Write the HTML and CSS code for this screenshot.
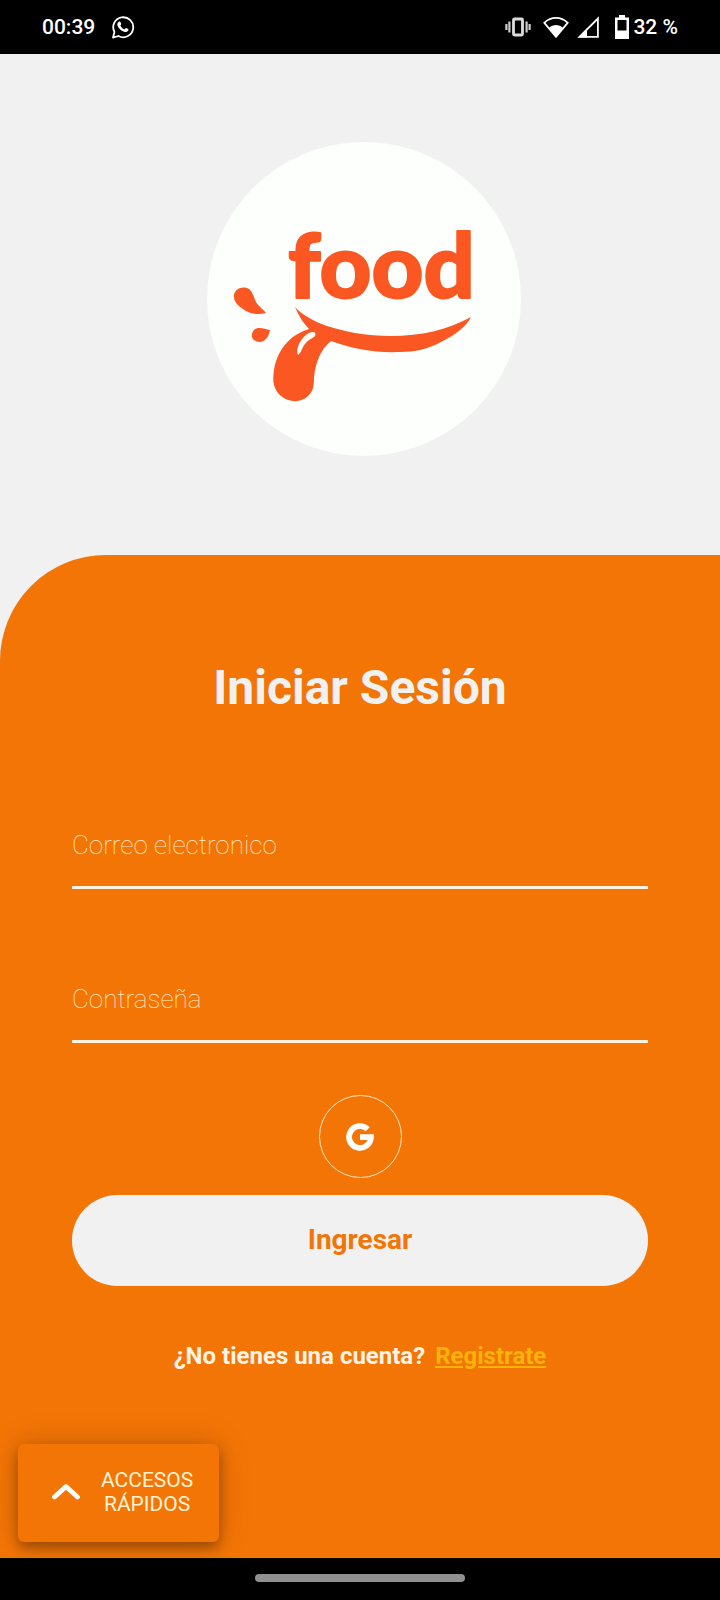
FILE: index.html
```html
<!DOCTYPE html>
<html lang="es">
<head>
<meta charset="utf-8">
<meta name="viewport" content="width=device-width, initial-scale=1">
<title>Iniciar Sesión</title>
<link rel="stylesheet" href="styles.css">
</head>
<body>
<header class="status-bar">
  <div class="status-left">
    <span>00:39</span>
    <svg class="icon-whatsapp" viewBox="0 0 24 24" width="24" height="24" aria-hidden="true">
      <path d="M2 22.600l1.500-5.500a10 10 0 1 1 3.900 3.900z" fill="none" stroke="#fff" stroke-width="1.800" stroke-linejoin="round"/>
      <path d="M8.200 6.600c.5-.3 1-.2 1.200.3l.8 1.900c.2.500-.7 1.400-.8 1.700.8 1.800 2.200 3.100 4.100 3.800.5-.3 1.100-1.400 1.600-1.200l2.100 1c.4.300.2 1.200-.1 1.700-1 1.300-2.500 1.500-4 1-3.400-1.100-5.500-3.300-6.700-6.300-.4-1.500.3-3.200 1.800-3.900z" fill="#fff"/>
    </svg>
  </div>
  <div class="status-right">
    <svg class="icon-vibrate" viewBox="0 0 26 20" width="26" height="20" aria-hidden="true">
      <rect x="8.500" y="2" width="9" height="16" rx="1" fill="none" stroke="#ddd" stroke-width="2.800"/>
      <path d="M1.400 7v6M4.400 4.500v11M24.600 7v6M21.600 4.500v11" stroke="#ccc" stroke-width="2.200"/>
    </svg>
    <svg class="icon-wifi" viewBox="0 0 26 22" width="26" height="22" aria-hidden="true">
      <path d="M1.300 6.800C8 .3 18 .3 24.700 6.800L13 20.800z" fill="none" stroke="#fff" stroke-width="1.800"/>
      <path d="M6.200 11.500c4-3.400 9.600-3.400 13.600 0L13 21z" fill="#fff"/>
    </svg>
    <svg class="icon-signal" viewBox="0 0 22 22" width="22" height="22" aria-hidden="true">
      <path d="M2.500 20.900L20.900 2.500v18.400z" fill="none" stroke="#fff" stroke-width="1.800"/>
      <path d="M1 21.500L10 12.500v9z" fill="#fff"/>
    </svg>
    <svg viewBox="0 0 14 24" width="14" height="24" aria-hidden="true">
      <path d="M4 0h6v2.500h4V24H0V2.500h4zM2.500 5v10.500h9V5z" fill="#fff" fill-rule="evenodd"/>
    </svg>
    <span class="battery-level">32 %</span>
  </div>
</header>

<main class="screen">
  <section class="hero">
    <svg class="logo" viewBox="0 0 314 314" role="img" aria-label="food">
      <circle cx="157" cy="157" r="157" fill="#fcfffc"/>
      <g fill="#fb5722">
        <text class="logo-word" x="81" y="156">food</text>
        <path d="M88 165C94 172 102 176 112 181C135 190 160 194 184 194C214 194 240 188 264 175C260 184 248 193 234 200C221 207 208 210 193 210C168 211 146 207 124 199C113 208 109 220 107 235C107 244 106 249 102 253C95 261 82 261 74 254C67 248 65 240 67 228C70 209 82 193 102 187C96 181 92 174 88 165z"/>
        <path d="M27 155C26 147 36 143 42 147C46 150 47 156 49 160C52 165 56 167 59 171C52 173 44 172 39 169C33 165 27 161 27 155z"/>
        <path d="M47 188C51 184 58 187 63 188C62 193 60 199 53 200C46 200 42 194 47 188z"/>
      </g>
      <path d="M91 213C88 207 94 195 102 191C106 189 110 190 108 194C105 197 102 197 98 202C94 207 95 210 91 213z" fill="#fcfffc"/>
    </svg>
  </section>

  <section class="panel">
    <h1 class="title">Iniciar Sesión</h1>
    <form class="form">
      <input class="field" type="email" placeholder="Correo electronico" aria-label="Correo electronico">
      <input class="field" type="password" placeholder="Contraseña" aria-label="Contraseña">
      <button class="google" type="button" aria-label="Google">
        <svg viewBox="0 0 28 28" width="28" height="28" aria-hidden="true">
          <path d="M21.700 6.300A10.900 10.900 0 1 0 24.900 14.200H14" fill="none" stroke="#fff" stroke-width="5.800"/>
        </svg>
      </button>
      <button class="submit" type="submit">Ingresar</button>
    </form>
    <p class="signup"><span>¿No tienes una cuenta?</span><a class="signup-link" href="#">Registrate</a></p>
    <button class="shortcuts" type="button">
      <svg viewBox="0 0 28 18" width="28" height="18" aria-hidden="true">
        <path d="M2.500 14L14 3.500 25.500 14" fill="none" stroke="#fff" stroke-width="4.800" stroke-linecap="round" stroke-linejoin="round"/>
      </svg>
      <span>ACCESOS<br>RÁPIDOS</span>
    </button>
  </section>
</main>

<footer class="nav-bar"><div class="nav-handle"></div></footer>
</body>
</html>
```
FILE: styles.css
```css
* {
  box-sizing: border-box;
}

body {
  margin: 0;
  min-height: 100vh;
  display: flex;
  flex-direction: column;
  background: #f1f1f1;
  font-family: Roboto, "Liberation Sans", sans-serif;
}

.status-bar {
  display: flex;
  align-items: center;
  justify-content: space-between;
  height: 54px;
  padding: 0 42px;
  background: #000;
  color: #fff;
  font-size: 21px;
  font-weight: 500;
}

.status-left,
.status-right {
  display: flex;
  align-items: center;
}

.icon-whatsapp {
  margin-left: 16px;
}

.icon-vibrate,
.icon-wifi {
  margin-right: 12px;
}

.icon-signal {
  margin: 0 16px 0 -4px;
}

.battery-level {
  margin-left: 4px;
}

.screen {
  flex: 1;
  display: flex;
  flex-direction: column;
}

.hero {
  display: flex;
  justify-content: center;
  padding: 88px 0 99px 7px;
}

.logo {
  width: 314px;
  height: 314px;
}

.logo-word {
  font-family: Lato, sans-serif;
  font-size: 90px;
  font-weight: 900;
  stroke: #fb5722;
  stroke-width: 2px;
  stroke-linejoin: round;
}

.panel {
  position: relative;
  flex: 1;
  padding: 105px 10% 0;
  border-top-left-radius: 106px;
  background: #f37506;
}

.title {
  margin: 0;
  color: #f1f1f1;
  font-size: 48px;
  font-weight: 700;
  line-height: 56px;
  text-align: center;
}

.form {
  display: flex;
  flex-direction: column;
  align-items: center;
  margin-top: 83px;
}

.field {
  width: 100%;
  height: 90px;
  margin-bottom: 64px;
  padding: 4px 0 0;
  border: 0;
  border-bottom: 3px solid #fff3e0;
  border-radius: 0;
  outline: 0;
  background: transparent;
  color: #fff;
  font-family: inherit;
  font-size: 26px;
  font-weight: 100;
}

.field + .google {
  margin-top: -12px;
}

.field::placeholder {
  color: #ffedcc;
  opacity: 1;
}

.google {
  display: flex;
  align-items: center;
  justify-content: center;
  width: 83px;
  height: 83px;
  padding: 0;
  border: 1px solid #ffe9c8;
  border-radius: 50%;
  background: transparent;
}

.submit {
  width: 100%;
  height: 91px;
  margin-top: 17px;
  padding: 0 0 2px;
  border: 0;
  border-radius: 46px;
  background: #f1f1f1;
  color: #f37506;
  font-family: inherit;
  font-size: 28px;
  font-weight: 700;
}

.signup {
  display: flex;
  justify-content: center;
  gap: 10px;
  margin: 56px 0 0;
  color: #fff3e6;
  font-size: 24px;
  font-weight: 700;
  line-height: 28px;
}

.signup-link {
  color: #f9b208;
}

.shortcuts {
  position: absolute;
  bottom: 16px;
  left: 18px;
  display: flex;
  align-items: center;
  gap: 21px;
  padding: 24px 26px 26px 34px;
  border: 0;
  border-radius: 6px;
  background: #f37506;
  box-shadow: 0 6px 12px rgba(0, 0, 0, 0.3), 0 0 32px rgba(0, 0, 0, 0.18);
  color: #fff3d6;
  font-family: inherit;
  font-size: 21px;
  line-height: 24px;
  text-align: center;
}

.nav-bar {
  position: relative;
  display: flex;
  align-items: center;
  justify-content: center;
  height: 42px;
  padding-bottom: 2px;
  background: #000;
}

.nav-handle {
  width: 210px;
  height: 8px;
  border-radius: 4px;
  background: #909090;
}
```
